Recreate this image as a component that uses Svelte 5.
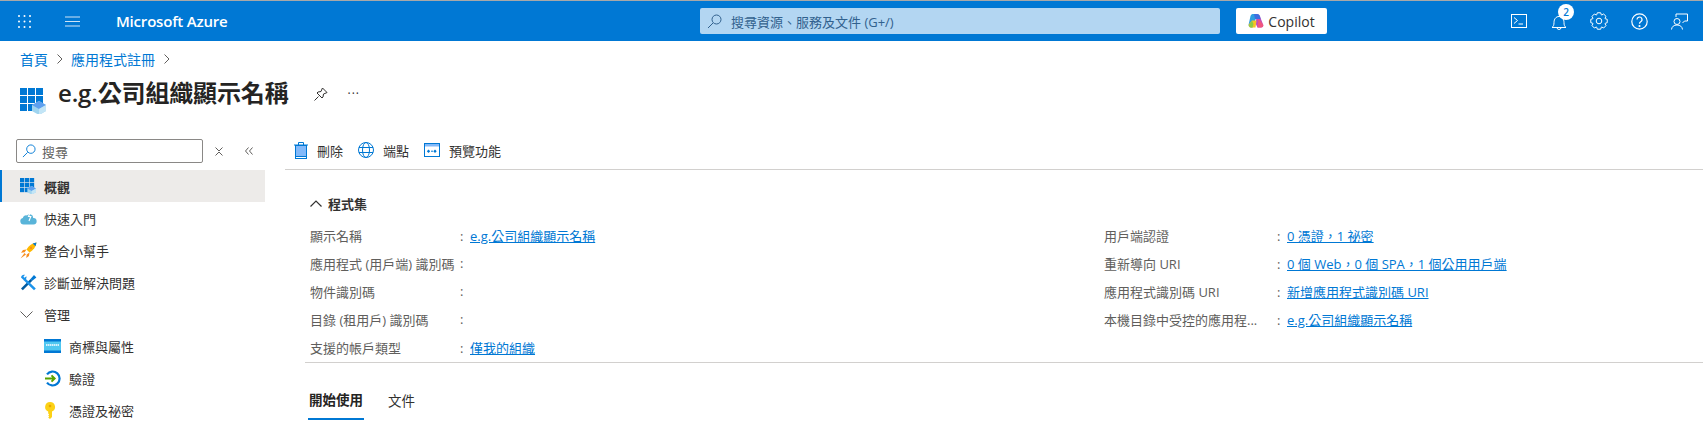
<script>
  // app registration overview page
  const navTop = [
    { label: '概觀', icon: 'grid', active: true },
    { label: '快速入門', icon: 'cloud' },
    { label: '整合小幫手', icon: 'rocket' },
    { label: '診斷並解決問題', icon: 'tools' }
  ];
  const navManage = [
    { label: '商標與屬性', icon: 'brand' },
    { label: '驗證', icon: 'auth' },
    { label: '憑證及祕密', icon: 'key' }
  ];
  const leftProps = [
    { k: '顯示名稱', v: 'e.g.公司組織顯示名稱' },
    { k: '應用程式 (用戶端) 識別碼', v: '' },
    { k: '物件識別碼', v: '' },
    { k: '目錄 (租用戶) 識別碼', v: '' },
    { k: '支援的帳戶類型', v: '僅我的組織' }
  ];
  const rightProps = [
    { k: '用戶端認證', v: '0 憑證，1 祕密' },
    { k: '重新導向 URI', v: '0 個 Web，0 個 SPA，1 個公用用戶端' },
    { k: '應用程式識別碼 URI', v: '新增應用程式識別碼 URI' },
    { k: '本機目錄中受控的應用程...', v: 'e.g.公司組織顯示名稱' }
  ];

  // 8 tooth gear outline, centred on 9,9
  function gearOutline() {
    const pts = [];
    for (let i = 0; i < 8; i++) {
      const a = (i * Math.PI) / 4;
      for (const [r, d] of [[6.6, -0.36], [8.4, -0.2], [8.4, 0.2], [6.6, 0.36]]) {
        pts.push(`${(9 + r * Math.sin(a + d)).toFixed(2)} ${(9 - r * Math.cos(a + d)).toFixed(2)}`);
      }
    }
    return 'M' + pts.join('L') + 'z';
  }
  const gear = gearOutline();
</script>

{#snippet appGrid(size)}
  <svg width={size} height={size} viewBox="0 0 26 26">
    <g fill="#0078d4">
      <rect x="0" y="0" width="7" height="7" /><rect x="8" y="0" width="7" height="7" /><rect x="16" y="0" width="7" height="7" />
      <rect x="0" y="8" width="7" height="7" /><rect x="8" y="8" width="7" height="7" /><rect x="16" y="8" width="7" height="7" />
      <rect x="0" y="16" width="7" height="7" /><rect x="8" y="16" width="7" height="7" />
    </g>
    <path d="M12 17l7-4 7 4v6l-7 4-7-4z" fill="#9fd4ef" />
    <path d="M12 17l7-4 7 4-7 4z" fill="#5ea0ef" />
    <path d="M19 21l7-4v6l-7 4z" fill="#c3e5f6" />
  </svg>
{/snippet}

{#snippet navIcon(name)}
  {#if name === 'grid'}
    {@render appGrid(16)}
  {:else if name === 'cloud'}
    <svg width="17" height="14" viewBox="0 0 17 14">
      <path d="M3.500 13.500a3.300 3.300 0 0 1-.7-6.500A3.300 3.300 0 0 1 7 4.500a3.500 3.500 0 0 1 6.200 2.400 3.300 3.300 0 0 1 .3 6.600z" fill="#59b4d9" />
      <path d="M10.500 .5L8.500 5.500h2.300L9 10" fill="none" stroke="#fff" stroke-width="1.100" />
    </svg>
  {:else if name === 'rocket'}
    <svg width="17" height="17" viewBox="0 0 17 17">
      <path d="M16.500 .5c-4.500.5-7.500 3-10 7l3 3c4-2.500 6.500-5.500 7-10z" fill="#ffb900" />
      <path d="M16.500 .5l-3.800 1 2.800 2.800z" fill="#0078d4" />
      <path d="M6.500 7.500L3 8l-2 2.800 3.600-.5zM9.500 10.500L9 14l-2.800 2 .5-3.600z" fill="#f78d1e" />
      <path d="M4.500 11L.5 16.500 6 12.500z" fill="#f78d1e" />
      <circle cx="11" cy="6" r="1.200" fill="#f78d1e" />
    </svg>
  {:else if name === 'tools'}
    <svg width="17" height="17" viewBox="0 0 17 17">
      <path d="M1 14.500L10.500 5 12.300 6.800 2.800 16.300z" fill="#005ba1" />
      <path d="M1 3.500A3.400 3.400 0 0 1 5 .8L3.400 2.700l1.100 1.100 1.900-1.600A3.400 3.400 0 0 1 3.900 6.200z" fill="#1b93eb" />
      <path d="M5.400 4.600L15.800 14.500 14 16.300 3.700 6.300z" fill="#1b93eb" />
      <path d="M10.500 5l3.500-4 2.400 2.400-4.100 3.400z" fill="#0078d4" />
    </svg>
  {:else if name === 'brand'}
    <svg width="17" height="14" viewBox="0 0 17 14">
      <rect width="17" height="14" fill="#50c7f0" />
      <rect width="17" height="2.500" fill="#0078d4" />
      <rect y="11.500" width="17" height="2.500" fill="#0078d4" />
      <path d="M2 6h13" stroke="#fff" stroke-width="1.400" stroke-dasharray="1.500 .5" />
    </svg>
  {:else if name === 'auth'}
    <svg width="17" height="17" viewBox="0 0 17 17">
      <path d="M3 4.300A7 7 0 1 1 3 12.700" fill="none" stroke="#0078d4" stroke-width="2.200" />
      <path d="M1 8.500h9.500M7.500 5.300l3.200 3.200-3.200 3.200" fill="none" stroke="#57a300" stroke-width="1.900" />
    </svg>
  {:else if name === 'key'}
    <svg width="12" height="17" viewBox="0 0 12 17">
      <path d="M6 0a5 5 0 0 1 2 9.600V15l-2 2-1.800-1.500 1-1-1-1 1-1-1-1V9.600A5 5 0 0 1 6 0z" fill="#fcd116" />
      <circle cx="6" cy="4" r="1.300" fill="#e8a600" />
    </svg>
  {/if}
{/snippet}

<div class="page">
  <header class="topbar">
    <div class="top-left">
      <svg class="waffle" width="13" height="13" viewBox="0 0 13 13" fill="#fff">
        {#each [1, 6.500, 12] as cy}
          {#each [1, 6.500, 12] as cx}
            <circle {cx} {cy} r="1" />
          {/each}
        {/each}
      </svg>
      <svg class="burger" width="15" height="11" viewBox="0 0 15 11" stroke="#cfe4f6" stroke-width="1.200">
        <path d="M0 1h15M0 5.500h15M0 10h15" />
      </svg>
      <span class="brand">Microsoft Azure</span>
    </div>
    <div class="top-search">
      <svg width="15" height="15" viewBox="0 0 15 15" fill="none" stroke="#31618e" stroke-width="1">
        <circle cx="9.500" cy="5.500" r="4.500" /><path d="M6 9L1 14" />
      </svg>
      <span>搜尋資源、服務及文件 (G+/)</span>
    </div>
    <button class="copilot">
      <svg width="16" height="16" viewBox="0 0 16 16">
        <path d="M4.500 1h5L7 8l-2.500 6.500H3A2.500 2.500 0 0 1 .7 11.300L2.500 3A2.500 2.500 0 0 1 4.500 1z" fill="#2f9fe0" />
        <path d="M9 1.200c1.800 0 2.600.8 3 2.300l3.200 8.200c.5 1.500-.6 2.800-2.200 2.800H9.500l-2-4z" fill="#c24dbb" />
        <path d="M10.500 5.500l4.700 6.200c.5 1.500-.6 2.800-2.200 2.800H9.500z" fill="#f0567f" />
        <path d="M4 7.500h4.500L7.500 14.500H3A2.500 2.500 0 0 1 .8 11.500z" fill="#f7c325" />
        <path d="M1 12l3-4.500 1.500 3.500-1 3.500H3A2.400 2.400 0 0 1 1 12z" fill="#8fcb45" />
        <path d="M6 1h3c1.500 0 2.500.8 3 2.500L12.500 6H7z" fill="#3d6fe0" />
      </svg>
      Copilot
    </button>
    <div class="top-icons">
      <span class="cell">
        <svg width="16" height="14" viewBox="0 0 16 14" fill="none" stroke="#fff" stroke-width="1">
          <rect x=".5" y=".5" width="15" height="13" /><path d="M3 3.500L6.500 6.500 3 9.500M7.500 10h4.500" />
        </svg>
      </span>
      <span class="cell">
        <div class="bell">
          <svg width="16" height="17" viewBox="0 0 16 17" fill="none" stroke="#fff" stroke-width="1">
            <path d="M1 13.500c1.500-1 2-2.500 2-5C3 5 5 2.500 8 2.500s5 2.500 5 6c0 2.500.5 4 2 5zM6 13.500a2 2 0 0 0 4 0" />
          </svg>
          <span class="badge">2</span>
        </div>
      </span>
      <span class="cell">
        <svg width="18" height="18" viewBox="0 0 18 18" fill="none" stroke="#fff" stroke-width="1">
          <path d={gear} /><circle cx="9" cy="9" r="2.800" />
        </svg>
      </span>
      <span class="cell">
        <svg width="17" height="17" viewBox="0 0 17 17" fill="none" stroke="#fff" stroke-width="1.200">
          <circle cx="8.500" cy="8.500" r="7.700" />
          <path d="M6 6.500a2.500 2.500 0 1 1 3.700 2.200c-.8.500-1.200 1-1.200 2" />
          <circle cx="8.500" cy="13" r=".5" fill="#fff" />
        </svg>
      </span>
      <span class="cell">
        <svg width="17" height="17" viewBox="0 0 17 17" fill="none" stroke="#fff" stroke-width="1">
          <path d="M5 4V1h11.500v7h-3l-2 2" />
          <circle cx="6" cy="8.500" r="3" />
          <path d="M.5 16.500c.3-2.800 2.300-4.500 5.500-4.500s5.200 1.700 5.500 4.500" />
        </svg>
      </span>
    </div>
  </header>

  <nav class="crumbs">
    <a href="#home">首頁</a>
    <svg width="6" height="10" viewBox="0 0 6 10" class="sep"><path d="M.5.500L5 5 .5 9.500" /></svg>
    <a href="#apps">應用程式註冊</a>
    <svg width="6" height="10" viewBox="0 0 6 10" class="sep"><path d="M.5.500L5 5 .5 9.500" /></svg>
  </nav>

  <div class="title-row">
    <div class="title-icon">{@render appGrid(26)}</div>
    <h1>e.g.公司組織顯示名稱</h1>
    <svg class="pin" width="14" height="14" viewBox="0 0 14 14" fill="none" stroke="#323130" stroke-width="1">
      <path d="M.5 13.500L4.500 9.500M8.500 1L13 5.500 12 6 9.500 7 9 10 8 11 3 6 4 5 7 4.500 8 2z" />
    </svg>
    <span class="dots">···</span>
  </div>

  <div class="body">
    <aside class="side">
      <div class="side-search">
        <div class="side-input">
          <svg width="14" height="14" viewBox="0 0 15 15" fill="none" stroke="#0078d4" stroke-width="1">
            <circle cx="9.500" cy="5.500" r="4.500" /><path d="M6 9L1 14" />
          </svg>
          <span>搜尋</span>
        </div>
        <svg class="ctl" width="8" height="9" viewBox="0 0 8 9"><path d="M.5.500L4 4 7.500.500M.5 8.500L4 5 7.500 8.500" /></svg>
        <svg class="ctl collapse" width="8" height="8" viewBox="0 0 8 8"><path d="M3.500.500L.5 4l3 3.500M7.500.500L4.500 4l3 3.500" /></svg>
      </div>
      {#each navTop as item}
        <div class="nav-row" class:active={item.active}>
          <span class="nav-icon">{@render navIcon(item.icon)}</span>
          <span>{item.label}</span>
        </div>
      {/each}
      <div class="nav-row">
        <span class="nav-icon">
          <svg width="13" height="7" viewBox="0 0 13 7" fill="none" stroke="#605e5c" stroke-width="1"><path d="M.5.500L6.500 6.500 12.500.500" /></svg>
        </span>
        <span>管理</span>
      </div>
      {#each navManage as item}
        <div class="nav-row sub">
          <span class="nav-icon">{@render navIcon(item.icon)}</span>
          <span>{item.label}</span>
        </div>
      {/each}
    </aside>

    <main class="main">
      <div class="toolbar">
        <span class="tool">
          <svg width="14" height="17" viewBox="0 0 14 17">
            <rect x="1.500" y="3.500" width="11" height="13" fill="#83b9f9" stroke="#0078d4" />
            <path d="M0 3h14M4.500 3V.500h5V3" fill="none" stroke="#0078d4" />
            <rect x="1.500" y="14.500" width="11" height="2" fill="#fff" stroke="#0078d4" />
          </svg>
          刪除
        </span>
        <span class="tool">
          <svg width="16" height="16" viewBox="0 0 16 16" fill="none" stroke="#0078d4" stroke-width="1">
            <circle cx="8" cy="8" r="7.500" /><ellipse cx="8" cy="8" rx="3.500" ry="7.500" /><path d="M1 5.500h14M1 10.500h14" />
          </svg>
          端點
        </span>
        <span class="tool">
          <svg width="16" height="14" viewBox="0 0 16 14">
            <rect x=".5" y=".5" width="15" height="13" fill="#fff" stroke="#0078d4" />
            <rect x="1" y="1" width="14" height="2.500" fill="#83b9f9" />
            <path d="M4.500 6.500l1.700 1.700-1.700 1.700-1.700-1.700zM11 6.500l1.700 1.700-1.700 1.700-1.700-1.700z" fill="#0078d4" />
            <path d="M7 8.200h2" stroke="#0078d4" />
          </svg>
          預覽功能
        </span>
      </div>

      <div class="content">
        <div class="section-head">
          <svg width="12" height="7" viewBox="0 0 12 7" fill="none" stroke="#323130" stroke-width="1.200"><path d="M.5 6.500L6 1l5.500 5.500" /></svg>
          程式集
        </div>
        <div class="props">
          <dl class="col col-left">
            {#each leftProps as p}
              <dt>{p.k}</dt>
              <dd><span class="colon">:</span>{#if p.v}<a href="#v">{p.v}</a>{/if}</dd>
            {/each}
          </dl>
          <dl class="col col-right">
            {#each rightProps as p}
              <dt>{p.k}</dt>
              <dd><span class="colon">:</span><a href="#v">{p.v}</a></dd>
            {/each}
          </dl>
        </div>
        <div class="tabs">
          <span class="tab on">開始使用</span>
          <span class="tab">文件</span>
        </div>
      </div>
    </main>
  </div>
</div>

<style>
  :global(body) {
    margin: 0;
    background: #fff;
    overflow: hidden;
  }

  .page {
    width: 1703px;
    height: 429px;
    overflow: hidden;
    font-family: "Open Sans", "Noto Sans CJK TC", sans-serif;
    font-size: 13px;
    color: #323130;
  }

  .topbar {
    height: 40px;
    border-top: 1px solid #a8a8a8;
    background: #0078d4;
    display: flex;
    align-items: center;
    color: #fff;
  }

  .top-left {
    width: 699px;
    flex: none;
    padding-left: 18px;
    box-sizing: border-box;
    display: flex;
    align-items: center;
  }

  .burger {
    margin-left: 34px;
  }

  .brand {
    margin-left: 36px;
    font-size: 15px;
    font-weight: 600;
    letter-spacing: -.2px;
  }

  .top-search {
    width: 520px;
    height: 26px;
    margin: 0 16px 0 1px;
    border-radius: 2px;
    background: #b3d6f2;
    color: #31618e;
    display: flex;
    align-items: center;
    gap: 9px;
    padding-left: 7px;
    box-sizing: border-box;
    font-size: 13px;
  }

  .copilot {
    width: 91px;
    height: 26px;
    border: 0;
    border-radius: 2px;
    background: #fff;
    color: #323130;
    font: inherit;
    font-size: 14px;
    font-weight: 500;
    display: flex;
    align-items: center;
    justify-content: center;
    gap: 4px;
    padding: 0;
  }

  .top-icons {
    margin-left: auto;
    padding-right: 4px;
    display: flex;
    align-items: center;
  }

  .cell {
    width: 40px;
    display: flex;
    justify-content: center;
    align-items: center;
  }

  .bell {
    position: relative;
    display: flex;
    margin-top: 3px;
  }

  .badge {
    position: absolute;
    top: -10px;
    left: 7px;
    width: 16px;
    height: 16px;
    border-radius: 50%;
    background: #fff;
    color: #0078d4;
    font-size: 10px;
    font-weight: 600;
    line-height: 16px;
    text-align: center;
  }

  .crumbs {
    height: 33px;
    padding: 2px 0 0 20px;
    display: flex;
    align-items: center;
    gap: 8px;
    box-sizing: border-box;
    font-size: 14px;
  }

  .crumbs a {
    color: #0078d4;
    text-decoration: none;
  }

  .sep {
    fill: none;
    stroke: #605e5c;
    margin-left: 1px;
  }

  .title-row {
    height: 50px;
    display: flex;
    align-items: flex-start;
    padding-left: 20px;
  }

  .title-icon {
    margin-top: 14px;
    display: flex;
  }

  h1 {
    margin: 1px 0 0 12px;
    font-size: 24px;
    line-height: 36px;
    font-weight: 600;
    letter-spacing: -.15px;
    color: #252423;
  }

  .pin {
    margin: 13px 0 0 26px;
  }

  .dots {
    margin: 11px 0 0 19px;
    font-size: 12px;
    letter-spacing: 1px;
    color: #323130;
  }

  .body {
    display: flex;
    margin-top: 15px;
  }

  .side {
    width: 265px;
    flex: none;
    margin-right: 20px;
  }

  .side-search {
    height: 31px;
    display: flex;
    align-items: flex-start;
  }

  .side-input {
    width: 187px;
    height: 24px;
    margin-left: 16px;
    box-sizing: border-box;
    border: 1px solid #8a8886;
    border-radius: 2px;
    display: flex;
    align-items: center;
    gap: 6px;
    padding-left: 5px;
    font-size: 13px;
    color: #605e5c;
  }

  .ctl {
    margin: 8px 0 0 12px;
    fill: none;
    stroke: #605e5c;
  }

  .collapse {
    margin-left: 22px;
  }

  .nav-row {
    height: 32px;
    display: flex;
    align-items: center;
    padding-left: 20px;
    box-sizing: border-box;
    font-size: 13px;
    color: #323130;
  }

  .nav-row.active {
    background: #edebe9;
    border-left: 2px solid #0078d4;
    padding-left: 18px;
    font-weight: 600;
  }

  .nav-row.sub {
    padding-left: 44px;
  }

  .nav-icon {
    width: 24px;
    flex: none;
    display: flex;
    align-items: center;
  }

  .nav-row.sub .nav-icon {
    width: 25px;
  }

  .main {
    flex: 1;
    min-width: 0;
  }

  .toolbar {
    height: 30px;
    border-bottom: 1px solid #d2d0ce;
    display: flex;
    align-items: flex-start;
    gap: 15px;
    padding-left: 9px;
    font-size: 13px;
  }

  .tool {
    display: flex;
    align-items: center;
    gap: 9px;
    height: 22px;
  }

  .content {
    padding-left: 20px;
  }

  .section-head {
    margin-top: 23px;
    height: 20px;
    padding-left: 5px;
    display: flex;
    align-items: center;
    gap: 6px;
    font-weight: 600;
  }

  .props {
    display: flex;
    border-bottom: 1px solid #d2d0ce;
    height: 141px;
    margin-top: 8px;
  }

  .col {
    margin: 0;
    display: grid;
    grid-auto-rows: 28px;
    align-items: center;
    color: #605e5c;
    font-size: 13px;
  }

  .col-left {
    width: 794px;
    padding-left: 5px;
    grid-template-columns: 150px 1fr;
  }

  .col-right {
    grid-template-columns: 173px 1fr;
  }

  dd {
    margin: 0;
  }

  .colon {
    display: inline-block;
    width: 10px;
  }

  dd a {
    color: #0078d4;
    text-decoration: underline;
  }

  .tabs {
    display: flex;
    gap: 23px;
    height: 40px;
    padding-left: 3px;
    margin-top: 23px;
  }

  .tab {
    height: 34px;
    padding: 0 1px 6px;
    display: flex;
    align-items: center;
    font-size: 13.500px;
    box-sizing: border-box;
  }

  .tab.on {
    font-weight: 600;
    border-bottom: 2px solid #0078d4;
    color: #252423;
  }
</style>
